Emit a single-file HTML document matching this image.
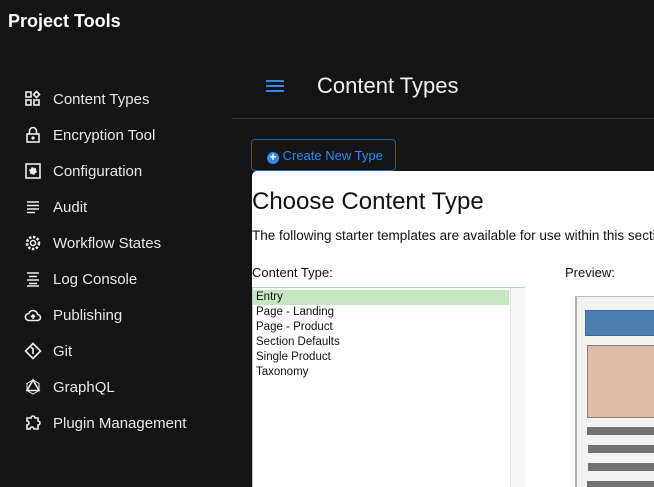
<!DOCTYPE html>
<html><head><style>
*{margin:0;padding:0;box-sizing:border-box}
body{width:654px;height:487px;overflow:hidden;background:#141414;font-family:"Liberation Sans",sans-serif;position:relative;color:#eee}
.abs{position:absolute}
.title{left:8px;top:11px;font-size:18px;font-weight:bold;color:#fff}
.nav{left:24px;font-size:15px;color:#e8e8e8;display:flex;align-items:center}
.nav svg{width:18px;height:18px;margin-right:11px;fill:none;stroke:#eee;stroke-width:1.6}
.hline{left:232px;top:118px;width:422px;height:1px;background:#3a3a3a}
.btn{left:251px;top:139px;width:145px;height:32px;border:1px solid #1f5fa8;border-radius:4px;color:#2a8cf0;font-size:13px;padding:8px 0 0 15px;white-space:nowrap}
.modal{left:252px;top:171px;width:402px;height:316px;background:#fff;border-top-left-radius:5px;color:#111;overflow:hidden}
</style></head><body>
<div class="abs title">Project Tools</div>

<div class="abs nav" style="top:90px"><svg viewBox="0 0 18 18"><rect x="2" y="2" width="5" height="5"/><rect x="2" y="10" width="5" height="5"/><rect x="10" y="10" width="5" height="5"/><path d="M12.5 1.5l3 3-3 3-3-3z"/></svg>Content Types</div>
<div class="abs nav" style="top:126px"><svg viewBox="0 0 18 18"><rect x="3" y="8" width="12" height="8"/><path d="M5.5 8V5a3.5 3.5 0 0 1 7 0v3"/><circle cx="9" cy="12" r="0.8" fill="#eee"/></svg>Encryption Tool</div>
<div class="abs nav" style="top:162px"><svg viewBox="0 0 18 18"><rect x="2" y="2" width="14" height="14"/><circle cx="9" cy="9" r="3" fill="#eee" stroke-dasharray="2 1"/></svg>Configuration</div>
<div class="abs nav" style="top:198px"><svg viewBox="0 0 18 18"><path d="M3 4h12M3 7.5h12M3 11h12M3 14.5h8"/></svg>Audit</div>
<div class="abs nav" style="top:234px"><svg viewBox="0 0 18 18"><circle cx="9" cy="9" r="2.5"/><circle cx="9" cy="9" r="6" stroke-dasharray="2.5 1.5" stroke-width="2.5"/></svg>Workflow States</div>
<div class="abs nav" style="top:270px"><svg viewBox="0 0 18 18"><path d="M3 3h12M5 6.5h8M3 10h12M5 13.5h8M3 16h12"/></svg>Log Console</div>
<div class="abs nav" style="top:306px"><svg viewBox="0 0 18 18"><path d="M5 14.5h8.5a3 3 0 0 0 0-6 4.5 4.5 0 0 0-8.7-1A3.5 3.5 0 0 0 5 14.5z"/><path d="M9 13V9M7 11l2-2 2 2"/></svg>Publishing</div>
<div class="abs nav" style="top:342px"><svg viewBox="0 0 18 18"><path d="M9 1.5l7.5 7.5L9 16.5 1.5 9z"/><path d="M9 6v6M7 5l2 2"/></svg>Git</div>
<div class="abs nav" style="top:378px"><svg viewBox="0 0 18 18"><path d="M9 2l6 3.5v7L9 16l-6-3.5v-7z" stroke-width="1"/><path d="M9 2l6 10.5H3z"/></svg>GraphQL</div>
<div class="abs nav" style="top:414px"><svg viewBox="0 0 18 18"><path d="M3 4h4a2 2 0 0 1 4 0h3v3a2 2 0 0 1 0 4v4h-4a2 2 0 0 0-4 0H3v-4a2 2 0 0 0 0-4z"/></svg>Plugin Management</div>

<div class="abs" style="left:266px;top:80px;width:18px;height:2px;background:#2a8cf0;box-shadow:0 5px 0 #2a8cf0,0 10px 0 #2a8cf0"></div>
<div class="abs" style="left:317px;top:73px;font-size:22px;color:#f2f2f2">Content Types</div>
<div class="abs hline"></div>

<div class="abs btn"><span style="display:inline-block;width:12px;height:12px;border-radius:50%;background:#2a8cf0;color:#fff;font-size:12px;line-height:11px;text-align:center;font-weight:bold;vertical-align:-1px">+</span> Create New Type</div>

<div class="abs modal">
  <div class="abs" style="left:0;top:17px;font-size:24px;white-space:nowrap">Choose Content Type</div>
  <div class="abs" style="left:0;top:57px;font-size:13.5px;white-space:nowrap">The following starter templates are available for use within this section</div>
  <div class="abs" style="left:0;top:94px;font-size:13px">Content Type:</div>
  <div class="abs" style="left:313px;top:94px;font-size:13px">Preview:</div>
  <div class="abs" style="left:0;top:116px;width:273px;height:210px;border:1px solid #b8cce0;font-size:11.5px;line-height:15px;padding-top:1px">
    <div class="abs" style="left:257px;top:0;width:15px;height:210px;background:#f6f6f6;border-left:1px solid #e4e4e4"></div>
    <div style="background:#c7e6c2;width:256px;padding-left:3px;margin-top:1px">Entry</div>
    <div style="padding-left:3px">Page - Landing</div>
    <div style="padding-left:3px">Page - Product</div>
    <div style="padding-left:3px">Section Defaults</div>
    <div style="padding-left:3px">Single Product</div>
    <div style="padding-left:3px">Taxonomy</div>
  </div>
  <div class="abs" style="left:323px;top:125px;width:100px;height:200px;background:#f3f3f1;border-left:2px solid #b0b0b0;border-top:1px solid #c0c0c0">
    <div class="abs" style="left:8px;top:13px;width:90px;height:26px;background:#4b7fb0;border:1px solid #3c6a94"></div>
    <div class="abs" style="left:10px;top:48px;width:90px;height:73px;background:#dfbca7;border:1px solid #8a8078"></div>
    <div class="abs" style="left:10px;top:130px;width:90px;height:8px;background:#727272"></div>
    <div class="abs" style="left:11px;top:148px;width:90px;height:8px;background:#727272"></div>
    <div class="abs" style="left:11px;top:166px;width:90px;height:8px;background:#727272"></div>
    <div class="abs" style="left:10px;top:184px;width:90px;height:8px;background:#727272"></div>
  </div>
</div>
</body></html>
